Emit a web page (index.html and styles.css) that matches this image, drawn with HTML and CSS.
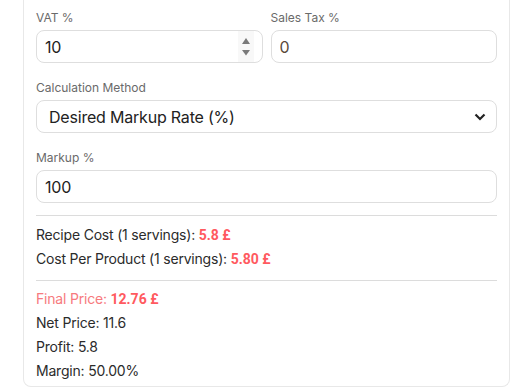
FILE: index.html
```html
<!DOCTYPE html>
<html lang="en">
<head>
  <meta charset="UTF-8">
  <title>Pricing Calculator</title>
  <link rel="stylesheet" href="styles.css">
</head>
<body>

<div class="card">
  <!-- tax row -->
  <div class="row">
    <div class="form-group">
      <label class="form-label">VAT %</label>
      <div class="field">
        <input class="field-input" type="text" value="10">
        <span class="spinner">
          <svg width="10" height="22" viewBox="0 0 10 22">
            <path d="M1 8 L5 2 L9 8 Z" fill="#7a7a7a"/>
            <path d="M1 14 L5 19.5 L9 14 Z" fill="#7a7a7a"/>
          </svg>
        </span>
      </div>
    </div>
    <div class="form-group">
      <label class="form-label">Sales Tax %</label>
      <div class="field">
        <input class="field-input tax" type="text" value="0">
      </div>
    </div>
  </div>

  <div class="form-group">
    <label class="form-label">Calculation Method</label>
    <div class="field">
      <select class="field-select">
        <option>Desired Markup Rate (%)</option>
        <option>Desired Profit Margin (%)</option>
      </select>
      <svg class="chevron" width="12" height="8" viewBox="0 0 12 8">
        <path d="M1.5 1.5 L6 6 L10.5 1.5" fill="none" stroke="#222" stroke-width="2.2"/>
      </svg>
    </div>
  </div>

  <div class="form-group last">
    <label class="form-label">Markup %</label>
    <div class="field">
      <input class="field-input" type="text" value="100">
    </div>
  </div>

  <hr class="divider">

  <div class="result-line">Recipe Cost (1 servings): <b class="value">5.8 £</b></div>
  <div class="result-line">Cost Per Product (1 servings): <b class="value">5.80 £</b></div>

  <hr class="divider second">

  <div class="result-line highlight">Final Price: <b class="value">12.76 £</b></div>
  <div class="result-line">Net Price: 11.6</div>
  <div class="result-line">Profit: 5.8</div>
  <div class="result-line">Margin: 50.00%</div>
</div>

</body>
</html>
```

FILE: styles.css
```css
* { box-sizing: border-box; margin: 0; padding: 0; }

body {
  background: #fff;
  font-family: "Inter", "Noto Sans", sans-serif;
  color: #2b2b2b;
  padding-left: 23px;
}

.card {
  width: 487px;
  border: 1px solid #e8e8e8;
  border-top: none;
  border-radius: 0 0 8px 8px;
  padding: 9px 12px 3px;
}

.row {
  display: flex;
  gap: 8px;
}

.row .form-group {
  flex: 1;
  min-width: 0;
}

.form-group {
  margin-bottom: 16px;
}

.form-group.last {
  margin-bottom: 0;
}

.form-label {
  display: block;
  font-size: 12px;
  line-height: 18px;
  color: #6a6a6a;
  margin-bottom: 3px;
}

.field {
  display: flex;
  align-items: center;
  height: 33px;
  border: 1px solid #dedede;
  border-radius: 8px;
  background: #fff;
}

.field-input,
.field-select {
  flex: 1;
  width: 100%;
  min-width: 0;
  height: 100%;
  border: none;
  outline: none;
  background: transparent;
  font-family: inherit;
  font-size: 16px;
  letter-spacing: -0.2px;
  color: #222;
  padding: 0 8px;
}

.field-input.tax {
  color: #5a4a3a;
}

.field-select {
  appearance: none;
  -webkit-appearance: none;
  padding-left: 12px;
}

.chevron {
  margin-right: 10px;
}

.spinner {
  display: flex;
  align-items: center;
  justify-content: center;
  flex: none;
  width: 16px;
  height: 31px;
  margin-right: 8px;
  background: #f8f8f8;
}

.divider {
  border: none;
  border-top: 1px solid #dcdcdc;
  margin: 12px 0 7px;
}

.divider.second {
  margin: 9px 0 6px;
}

.result-line {
  font-size: 14px;
  line-height: 24px;
  letter-spacing: -0.2px;
  color: #2b2b2b;
}

.value {
  font-family: "Roboto", "Liberation Sans", sans-serif;
  font-weight: 700;
  letter-spacing: 0;
  color: #ff5a5f;
}

.highlight {
  color: #f77a7e;
}
```
